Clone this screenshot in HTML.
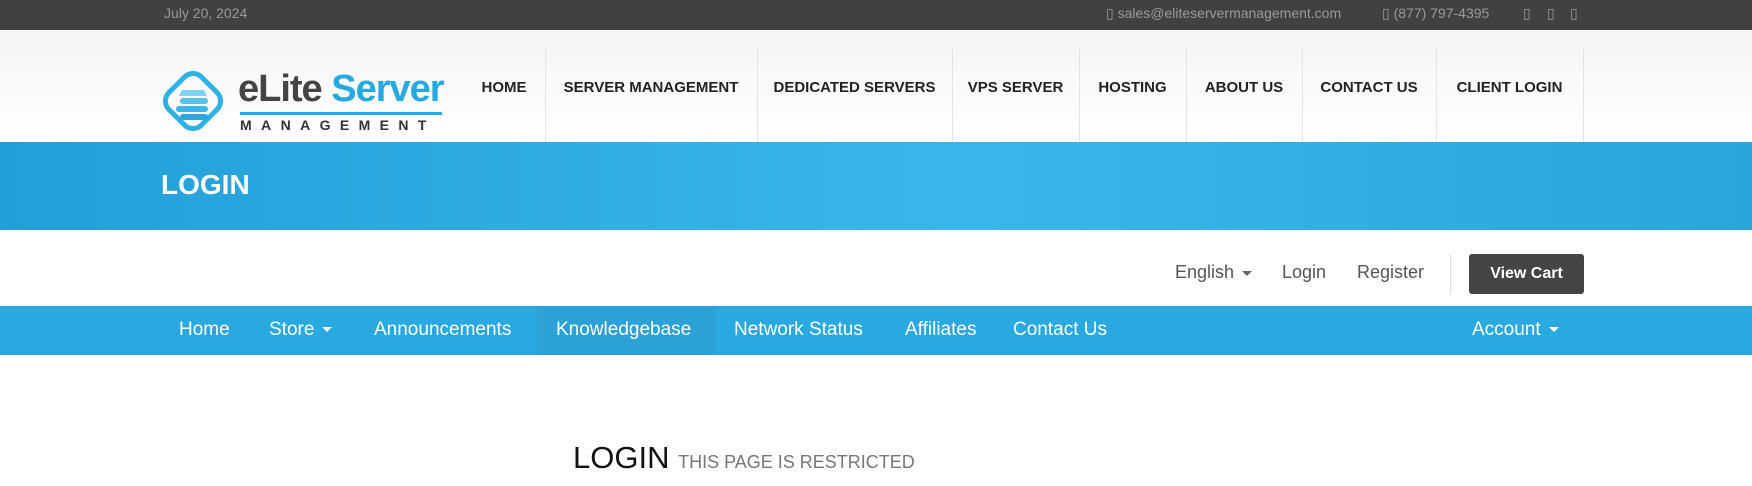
<!DOCTYPE html>
<html><head><meta charset="utf-8"><style>
*{margin:0;padding:0;box-sizing:border-box}
body{width:1752px;height:486px;overflow:hidden;background:#fff;font-family:"Liberation Sans",sans-serif;position:relative}
.a{position:absolute;white-space:nowrap}
#top{position:absolute;left:0;top:0;width:1752px;height:30px;background:#414141}
#top .a{color:#9a9a9a;font-size:14px;top:5px}
#hdr{position:absolute;left:0;top:30px;width:1752px;height:112px;background:linear-gradient(#f5f5f5,#fff)}
.nav{position:absolute;top:0;height:112px;line-height:116px;font-size:15px;font-weight:bold;color:#222;text-align:center}
.sep{position:absolute;top:18px;width:1px;height:94px;background:#e4e4e4}
#ban{position:absolute;left:0;top:142px;width:1752px;height:88px;background:linear-gradient(90deg,#229fd8 0%,#3ab6ea 55%,#2aa5dc 100%)}
#nav2{position:absolute;left:0;top:306px;width:1752px;height:49px;background:#29a9e0}
#nav2 .a{color:#fff;font-size:19px;top:13px}
.car{display:inline-block;border-left:5px solid transparent;border-right:5px solid transparent;border-top:5px solid currentColor;vertical-align:middle;margin-left:8px}
</style></head><body>
<div id="top">
<div class="a" style="left:164px">July 20, 2024</div>
<div class="a" style="left:1106px">▯ sales@eliteservermanagement.com</div>
<div class="a" style="left:1382px">▯ (877) 797-4395</div>
<div class="a" style="left:1523px">▯</div><div class="a" style="left:1547px">▯</div><div class="a" style="left:1570px">▯</div>
</div>
<div id="hdr">
<svg class="a" style="left:158px;top:36px" width="70" height="70" viewBox="0 0 70 70">
<rect x="12" y="12" width="46" height="46" rx="12" transform="rotate(45 35 35)" fill="none" stroke="#2fb1e6" stroke-width="5"/>
<path d="M24 24 h22 l3 6 h-28z" fill="#7fd3f3"/>
<rect x="22" y="32" width="28" height="6" rx="3" fill="#56c2ee"/>
<rect x="18" y="40" width="32" height="6" rx="3" fill="#3bb6e9"/>
<rect x="22" y="48" width="28" height="6" rx="3" fill="#2aa8e0"/>
</svg>
<div class="a" style="left:238px;top:38px;font-size:38px;font-weight:bold;letter-spacing:-1px;color:#444">eLite<span style="color:#26a9e1"> Server</span></div>
<div class="a" style="left:240px;top:82px;width:202px;height:3px;background:#26a9e1"></div>
<div class="a" style="left:240px;top:87px;font-size:14px;font-weight:bold;letter-spacing:9.4px;color:#333">MANAGEMENT</div>
<div class="nav" style="left:470px;width:68px">HOME</div>
<div class="sep" style="left:545px"></div>
<div class="nav" style="left:545px;width:212px">SERVER MANAGEMENT</div>
<div class="sep" style="left:757px"></div>
<div class="nav" style="left:757px;width:195px">DEDICATED SERVERS</div>
<div class="sep" style="left:952px"></div>
<div class="nav" style="left:952px;width:127px">VPS SERVER</div>
<div class="sep" style="left:1079px"></div>
<div class="nav" style="left:1079px;width:107px">HOSTING</div>
<div class="sep" style="left:1186px"></div>
<div class="nav" style="left:1186px;width:116px">ABOUT US</div>
<div class="sep" style="left:1302px"></div>
<div class="nav" style="left:1302px;width:134px">CONTACT US</div>
<div class="sep" style="left:1436px"></div>
<div class="nav" style="left:1436px;width:147px">CLIENT LOGIN</div>
<div class="sep" style="left:1583px"></div>
</div>
<div id="ban"><div class="a" style="left:161px;top:27px;font-size:28px;font-weight:bold;color:#fff">LOGIN</div></div>
<div class="a" style="left:1175px;top:262px;font-size:18px;color:#555">English<span class="car" style="color:#666"></span></div>
<div class="a" style="left:1282px;top:262px;font-size:18px;color:#555">Login</div>
<div class="a" style="left:1357px;top:262px;font-size:18px;color:#555">Register</div>
<div class="a" style="left:1450px;top:254px;width:1px;height:40px;background:#ddd"></div>
<div class="a" style="left:1469px;top:254px;width:115px;height:40px;background:#444;border-radius:3px;color:#fff;font-size:16px;font-weight:bold;text-align:center;line-height:40px">View Cart</div>
<div id="nav2">
<div class="a" style="left:537px;top:0;width:178px;height:49px;background:#2ba1d6"></div>
<div class="a" style="left:179px">Home</div>
<div class="a" style="left:269px">Store<span class="car"></span></div>
<div class="a" style="left:374px">Announcements</div>
<div class="a" style="left:556px">Knowledgebase</div>
<div class="a" style="left:734px">Network Status</div>
<div class="a" style="left:905px">Affiliates</div>
<div class="a" style="left:1013px">Contact Us</div>
<div class="a" style="left:1472px">Account<span class="car"></span></div>
</div>
<div class="a" style="left:573px;top:440px;font-size:31px;color:#111">LOGIN <span style="font-size:18px;color:#777">THIS PAGE IS RESTRICTED</span></div>
</body></html>
